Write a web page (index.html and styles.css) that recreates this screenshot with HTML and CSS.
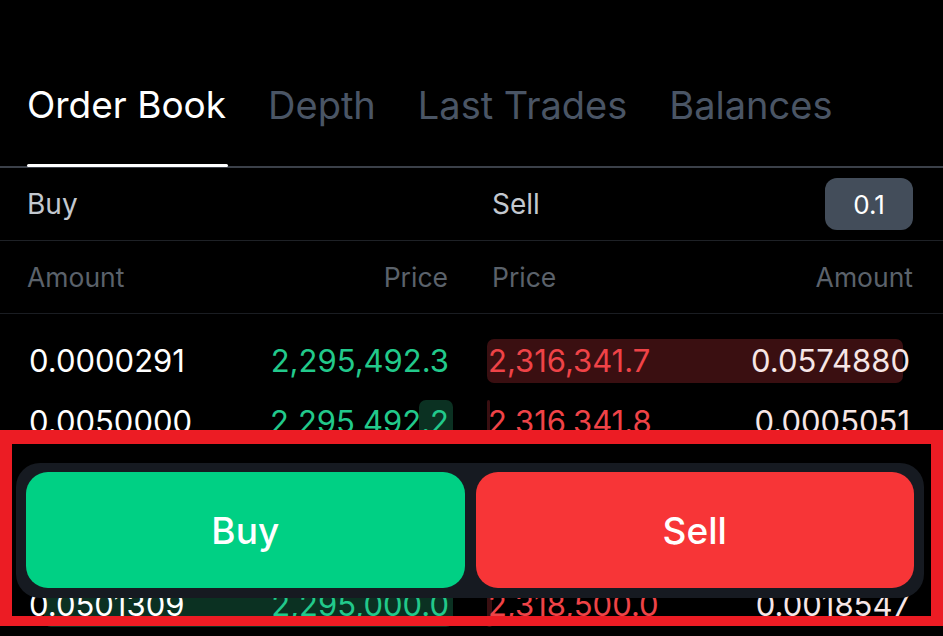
FILE: index.html
```html
<!DOCTYPE html>
<html lang="en">
<head>
    <meta charset="UTF-8">
    <meta name="viewport" content="width=device-width, initial-scale=1.0">
    <title>Order Book</title>
    <link rel="stylesheet" href="styles.css">
</head>
<body>
    <div class="screen">
        <nav class="tabs">
            <div class="tab active">Order Book</div>
            <div class="tab">Depth</div>
            <div class="tab">Last Trades</div>
            <div class="tab">Balances</div>
        </nav>

        <div class="book-line sides">
            <div class="cell-left">Buy</div>
            <div class="cell-right sell-head">
                <span>Sell</span>
                <span class="step">0.1</span>
            </div>
        </div>

        <div class="book-line heads">
            <div class="cell-left split">
                <span>Amount</span>
                <span>Price</span>
            </div>
            <div class="cell-right split">
                <span>Price</span>
                <span>Amount</span>
            </div>
        </div>

        <div class="rows">
            <div class="book-line row">
                <div class="bid">
                    <div class="bar" style="width: 0%"></div>
                    <span class="amount">0.0000291</span>
                    <span class="price">2,295,492.3</span>
                </div>
                <div class="ask">
                    <div class="bar" style="width: 97.6%"></div>
                    <span class="price">2,316,341.7</span>
                    <span class="amount">0.0574880</span>
                </div>
            </div>
            <div class="book-line row">
                <div class="bid">
                    <div class="bar" style="width: 8%"></div>
                    <span class="amount">0.0050000</span>
                    <span class="price">2,295,492.2</span>
                </div>
                <div class="ask">
                    <div class="bar" style="width: 0.8%"></div>
                    <span class="price">2,316,341.8</span>
                    <span class="amount">0.0005051</span>
                </div>
            </div>
            <div class="book-line row">
                <div class="bid">
                    <div class="bar" style="width: 0%"></div>
                    <span class="amount">0.0124000</span>
                    <span class="price">2,295,320.0</span>
                </div>
                <div class="ask">
                    <div class="bar" style="width: 0%"></div>
                    <span class="price">2,316,800.0</span>
                    <span class="amount">0.0031200</span>
                </div>
            </div>
            <div class="book-line row">
                <div class="bid">
                    <div class="bar" style="width: 6%"></div>
                    <span class="amount">0.0008712</span>
                    <span class="price">2,295,100.5</span>
                </div>
                <div class="ask">
                    <div class="bar" style="width: 12%"></div>
                    <span class="price">2,317,400.0</span>
                    <span class="amount">0.0102400</span>
                </div>
            </div>
            <div class="book-line row">
                <div class="bid">
                    <div class="bar" style="width: 96%"></div>
                    <span class="amount">0.0501309</span>
                    <span class="price">2,295,000.0</span>
                </div>
                <div class="ask">
                    <div class="bar" style="width: 1.2%"></div>
                    <span class="price">2,318,500.0</span>
                    <span class="amount">0.0018547</span>
                </div>
            </div>
        </div>

        <div class="actions">
            <button class="btn btn-buy">Buy</button>
            <button class="btn btn-sell">Sell</button>
        </div>

        <div class="mark"></div>
    </div>
</body>
</html>
```

FILE: styles.css
```css
body {
    margin: 0;
    padding: 0;
    background-color: #000;
    color: #fff;
    font-family: Inter, "Noto Sans", sans-serif;
}
.screen {
    position: relative;
    width: 943px;
    height: 636px;
    overflow: hidden;
}
.tabs {
    display: flex;
    gap: 42px;
    padding: 83px 27px 0;
    border-bottom: 2px solid #3b4049;
}
.tab {
    position: relative;
    font-size: 38px;
    line-height: 44px;
    padding-bottom: 39px;
    color: #4a5565;
}
.tab.active {
    color: #fff;
    font-size: 37px;
}
.tab.active::after {
    content: "";
    position: absolute;
    left: 0;
    right: -2px;
    bottom: -1px;
    height: 3px;
    border-radius: 2px;
    background-color: #fff;
}
.book-line {
    display: grid;
    grid-template-columns: 426px 426px;
    column-gap: 34px;
    padding: 0 30px 0 27px;
}
.sides {
    height: 72px;
    align-items: center;
    font-size: 28px;
    color: #c3c8cf;
    border-bottom: 1px solid #1e2126;
}
.sell-head {
    display: flex;
    justify-content: space-between;
    align-items: center;
    padding-left: 5px;
}
.step {
    width: 88px;
    height: 52px;
    border-radius: 12px;
    background-color: #434d5a;
    color: #fff;
    display: flex;
    align-items: center;
    justify-content: center;
    font-size: 26px;
}
.heads {
    height: 72px;
    align-items: center;
    font-size: 26.5px;
    color: #5b626b;
    border-bottom: 1px solid #1a1d22;
}
.split {
    display: flex;
    justify-content: space-between;
}
.heads .cell-left {
    padding-right: 5px;
}
.heads .cell-right {
    padding-left: 5px;
}
.rows {
    padding-top: 16px;
}
.row {
    height: 61px;
    align-items: center;
    font-size: 31px;
}
.bid,
.ask {
    position: relative;
    height: 44px;
    display: flex;
    justify-content: space-between;
    align-items: center;
}
.bid {
    padding: 0 4px 0 2px;
}
.ask {
    padding: 0 3px 0 1px;
}
.bar {
    position: absolute;
    top: 0;
    bottom: 0;
    border-radius: 7px;
}
.bid .bar {
    right: 0;
    background-color: #0b3122;
}
.ask .bar {
    left: 0;
    background-color: #3a0f11;
}
.bid span,
.ask span {
    position: relative;
}
.bid .price {
    color: #22c98b;
}
.ask .price {
    color: #ef4347;
}
.ask .amount {
    color: #f6e6e6;
}
.actions {
    position: absolute;
    left: 16px;
    top: 463px;
    width: 908px;
    box-sizing: border-box;
    padding: 9px 10px 10px;
    display: flex;
    gap: 11px;
    background-color: #161a21;
    border-radius: 24px;
}
.btn {
    flex: 1;
    height: 116px;
    border: none;
    border-radius: 22px;
    font-family: Inter, "Noto Sans", sans-serif;
    font-size: 37px;
    font-weight: 500;
    color: #fff;
    cursor: pointer;
}
.btn-buy {
    background-color: #00d084;
}
.btn-sell {
    background-color: #f73537;
}
.mark {
    position: absolute;
    left: 0;
    top: 430px;
    width: 943px;
    height: 196px;
    box-sizing: border-box;
    border: 12px solid #ec1c24;
    border-top-width: 14px;
    border-bottom-width: 10px;
    pointer-events: none;
}
```
